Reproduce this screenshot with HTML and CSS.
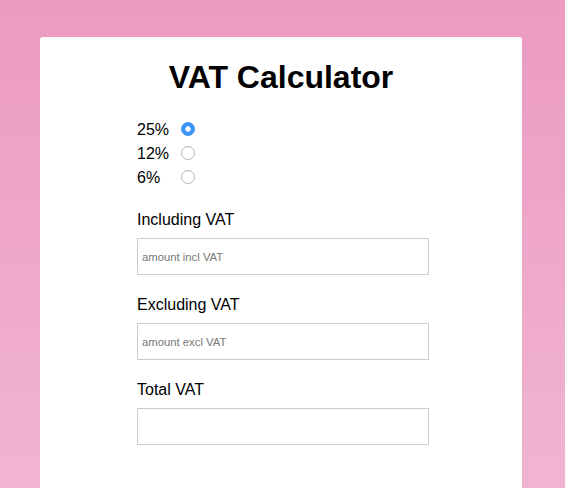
FILE: index.html
```html
<!DOCTYPE html>
<html>
<head>
<meta charset="utf-8">
<link rel="stylesheet" href="styles.css">
</head>
<body>
<div class="card">
  <h1 class="title">VAT Calculator</h1>
  <form class="form">
    <div class="rates">
      <label class="rate"><span class="rate-text">25%</span><input class="radio" type="radio" name="rate" checked></label>
      <label class="rate"><span class="rate-text">12%</span><input class="radio" type="radio" name="rate"></label>
      <label class="rate"><span class="rate-text">6%</span><input class="radio" type="radio" name="rate"></label>
    </div>
    <div class="field">
      <label class="field-label">Including VAT</label>
      <input class="field-input" type="text" placeholder="amount incl VAT">
    </div>
    <div class="field">
      <label class="field-label">Excluding VAT</label>
      <input class="field-input" type="text" placeholder="amount excl VAT">
    </div>
    <div class="field">
      <label class="field-label">Total VAT</label>
      <input class="field-input" type="text">
    </div>
  </form>
</div>
</body>
</html>
```
FILE: styles.css
```css
html, body {
  margin: 0;
  padding: 0;
}
body {
  height: 488px;
  overflow: hidden;
  background: linear-gradient(to bottom, #ec9ac1 0%, #f0b4d2 100%);
  font-family: "Liberation Sans", Arial, sans-serif;
  color: #000;
  padding-top: 37px;
  box-sizing: border-box;
}
.card {
  margin-left: 40px;
  width: 482px;
  height: 451px;
  background: #fff;
  border-radius: 3px 3px 0 0;
  padding-top: 22px;
  box-sizing: border-box;
}
.title {
  margin: 0;
  font-size: 32px;
  line-height: 37px;
  font-weight: bold;
  text-align: center;
}
.form {
  margin: 25px 0 0 97px;
  width: 292px;
}
.rates {
  display: flex;
  flex-direction: column;
  gap: 6px;
}
.rate {
  display: flex;
  align-items: center;
  height: 18px;
  font-size: 16px;
  line-height: 18px;
}
.rate-text {
  width: 44px;
}
.radio {
  appearance: none;
  -webkit-appearance: none;
  margin: 0;
  width: 14px;
  height: 14px;
  border-radius: 50%;
  border: 1px solid #b4b4b4;
  background: #fff;
  box-sizing: border-box;
  position: relative;
  top: -1px;
}
.radio:checked {
  border-color: #3a92f5;
  background: radial-gradient(circle, #fff 0 2.4px, #3b95f8 3px);
}
.field {
  display: flex;
  flex-direction: column;
  margin-top: 21px;
}
.rates + .field {
  margin-top: 24px;
}
.field-label {
  font-size: 16px;
  line-height: 18px;
  margin-bottom: 9px;
}
.field-input {
  width: 292px;
  height: 37px;
  box-sizing: border-box;
  border: 1px solid #cccccc;
  border-radius: 0;
  padding: 0 4px;
  font-family: "Liberation Sans", Arial, sans-serif;
  font-size: 11.3px;
  color: #333;
  outline: none;
}
.field-input::placeholder {
  color: #777;
}
```
